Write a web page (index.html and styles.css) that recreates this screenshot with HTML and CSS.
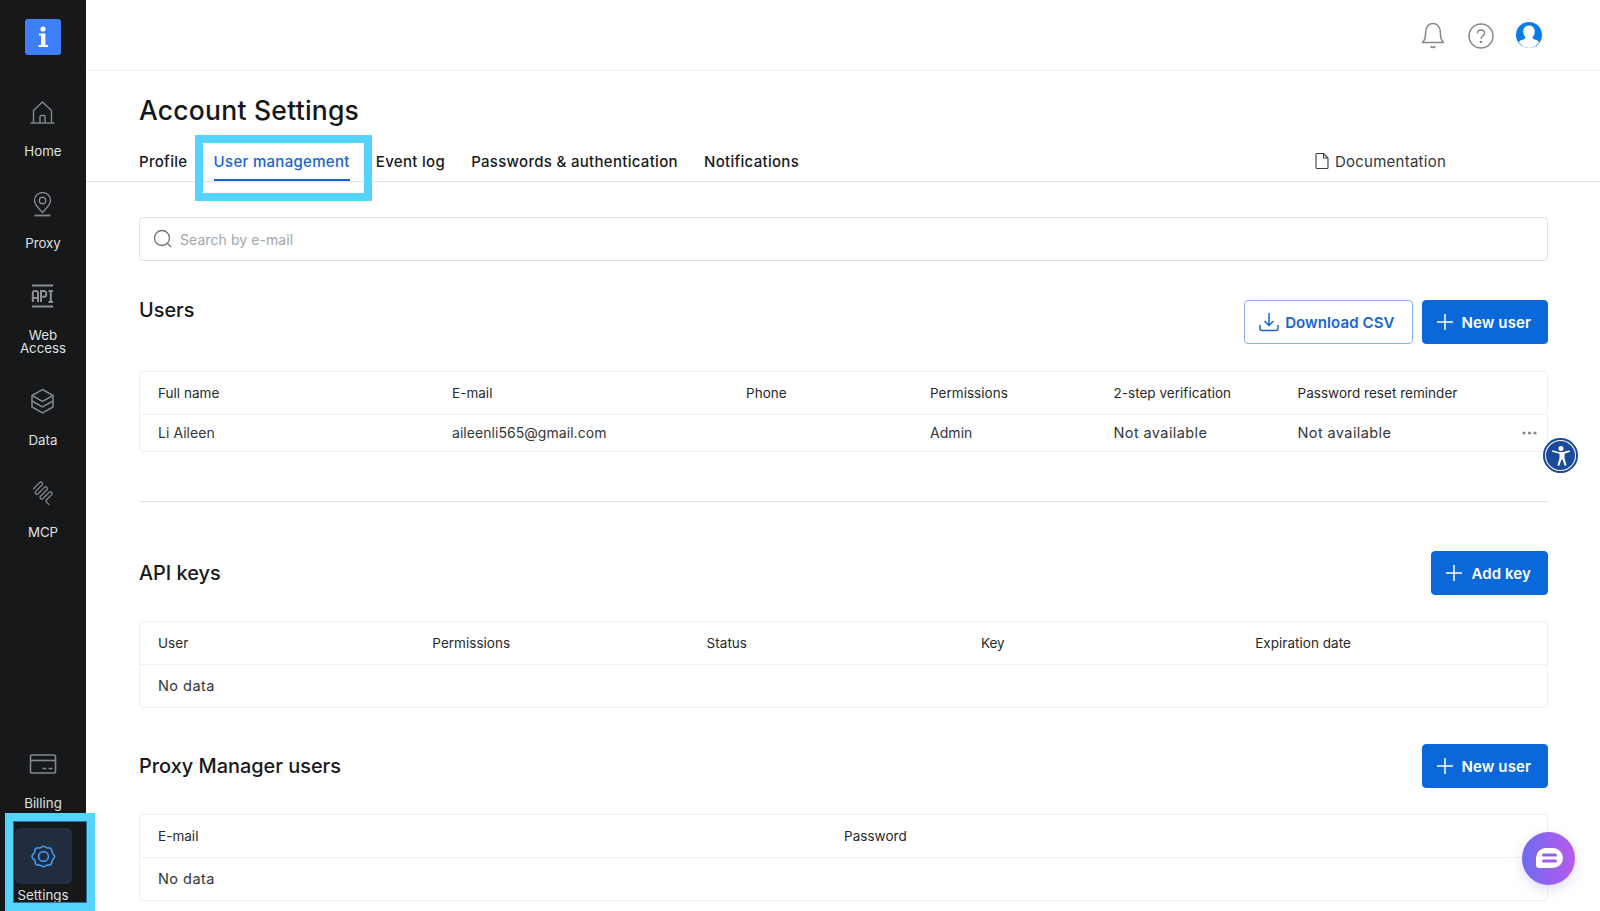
FILE: index.html
```html
<!DOCTYPE html>
<html lang="en">
<head>
<meta charset="utf-8">
<title>Account Settings</title>
<link rel="stylesheet" href="styles.css">
</head>
<body>
<div class="app">
  <aside class="sidebar">
    <div class="logo"><svg width="36" height="36" viewBox="0 0 36 36"><rect width="36" height="36" rx="3" fill="#3e7ffb"/><circle cx="18" cy="10" r="2.6" fill="#fff"/><path d="M14 14.5h6.4V26H23v2H13.5v-2H16v-9.5h-2z" fill="#fff"/></svg></div>
    <nav class="nav-top">
      <a class="nav-item"><svg class="ni" width="28" height="28" viewBox="0 0 28 28" fill="none" stroke="#85888c" stroke-width="1.4"><path d="M1.500 25h24"/><path d="M4.500 25V12.500L13.500 4 22.500 12.500V25"/><path d="M11 25v-6.500a1 1 0 0 1 1-1h3a1 1 0 0 1 1 1V25"/></svg><span>Home</span></a>
      <a class="nav-item"><svg class="ni" width="28" height="28" viewBox="0 0 28 28" fill="none" stroke="#85888c" stroke-width="1.4"><path d="M13.500 22.500C9 18 5.500 14.500 5.500 10.500a8 8 0 0 1 16 0c0 4-3.500 7.500-8 12z"/><circle cx="13.500" cy="10.500" r="3.200"/><path d="M5.500 25.500h16" stroke-width="1.800"/></svg><span>Proxy</span></a>
      <a class="nav-item"><svg class="ni" width="28" height="28" viewBox="0 0 28 28" fill="none" stroke="#8d9094" stroke-width="2"><path d="M3 3.500h21M3 24.500h21"/><path d="M3.800 20v-9a2 2 0 0 1 2-2h1.200a2 2 0 0 1 2 2v9M3.800 16h5.200M12 20V9h3.200a2 2 0 0 1 2 2v1.800a2 2 0 0 1-2 2H12M19.500 9h4.500M21.750 9v11M19.500 20h4.500"/></svg><span>Web<br>Access</span></a>
      <a class="nav-item"><svg class="ni" width="28" height="28" viewBox="0 0 28 28" fill="none" stroke="#85888c" stroke-width="1.500"><path d="M13.500 2.500l10.500 6v11.500l-10.500 6-10.500-6V8.500z"/><path d="M3 8.500l10.500 6 10.500-6M3 14l10.500 6 10.500-6"/></svg><span>Data</span></a>
      <a class="nav-item"><svg class="ni" width="28" height="28" viewBox="0 0 28 28" fill="none" stroke="#85888c" stroke-width="1.300"><path transform="translate(1.500 .5) rotate(45 12 13)" d="M3 17V8a1.700 1.700 0 0 1 3.400 0V17a1.700 1.700 0 0 0 3.400 0V8a1.700 1.700 0 0 1 3.400 0V17a1.700 1.700 0 0 0 3.400 0V8a1.700 1.700 0 0 1 3.400 0V15a2 2 0 0 0 2 2h3.500"/></svg><span>MCP</span></a>
    </nav>
    <nav class="nav-bottom">
      <a class="nav-item"><svg class="ni" width="28" height="28" viewBox="0 0 28 28" fill="none" stroke="#85888c" stroke-width="1.600"><rect x="1.500" y="5" width="25" height="18" rx="1.500"/><path d="M2 10.500h24" /><path d="M13.500 18.500h4M19.500 18.500h4"/></svg><span>Billing</span></a>
      <a class="nav-item nav-active"><span class="active-tile"><svg width="25" height="25" viewBox="0 0 28 28" fill="none" stroke="#3d9bf0" stroke-width="1.800"><path d="M9.500 4.500C11 4.500 12.300 2.500 14 2.500s3 2 4.500 2c2-.3 4 .5 4.500 1.800.5 1.500 0 2.500 1 3.700 1 1.100 2.500 2.300 2.500 4s-1.500 2.900-2.500 4c-1 1.200-.5 2.200-1 3.700-.5 1.300-2.500 2.100-4.500 1.800-1.500 0-2.800 2-4.500 2s-3-2-4.500-2c-2 .3-4-.5-4.500-1.800-.5-1.500 0-2.500-1-3.700C2.500 16.900 1 15.700 1 14s1.500-2.900 2.500-4c1-1.200.5-2.200 1-3.700C5 5 7.500 4.200 9.500 4.500z"/><circle cx="14" cy="14" r="5.500"/></svg></span><span class="settings-label">Settings</span></a>
    </nav>
  </aside>
  <main class="main">
    <header class="topbar">
      <svg class="ti-bell" width="26" height="28" viewBox="0 0 26 28" fill="none" stroke="#85888c" stroke-width="1.600"><path d="M2.500 21.500c2.200-2 3-4 3-8.500C5.500 6.500 8.500 2.500 13 2.500s7.500 4 7.500 10.500c0 4.500.8 6.500 3 8.500z" stroke-linejoin="round"/><path d="M10.500 25.500c1.500 1 3.500 1 5 0"/></svg>
      <svg class="ti-help" width="26" height="26" viewBox="0 0 26 26" fill="none" stroke="#85888c" stroke-width="1.500"><circle cx="13" cy="13" r="12"/><path d="M9.500 10.500c0-2 1.500-3.500 3.500-3.500s3.500 1.300 3.500 3.200c0 2.800-3.500 2.800-3.500 5.600"/><circle cx="13" cy="19" r=".6" fill="#85888c"/></svg>
      <svg class="ti-user" width="26" height="26" viewBox="0 0 26 26"><circle cx="13" cy="13" r="13" fill="#0a7ce8"/><path d="M13 3.500c-3.700 0-5.800 2.700-5.800 5.900 0 2.200.9 4.100 2 5.300.5.700.4 1.600-.4 2-1.700.9-4.600 1.400-6 3.300A12.900 12.900 0 0 0 13 25.900a12.900 12.900 0 0 0 10.200-5.900c-1.400-1.900-4.300-2.400-6-3.300-.8-.4-.9-1.300-.4-2 1.100-1.200 2-3.100 2-5.300 0-3.200-2.100-5.900-5.800-5.900z" fill="#fff"/></svg>
    </header>
    <div class="page-head">
      <h1 class="title">Account Settings</h1>
      <div class="tabs">
        <a class="tab">Profile</a>
        <a class="tab tab-active">User management</a>
        <a class="tab">Event log</a>
        <a class="tab">Passwords &amp; authentication</a>
        <a class="tab">Notifications</a>
        <a class="doc"><svg width="14" height="16" viewBox="0 0 14 16" fill="none" stroke="#3b3e42" stroke-width="1.100"><path d="M1 1.500a1 1 0 0 1 .8-1H8.500L13 5v9.500a1 1 0 0 1-1 1H2a1 1 0 0 1-1-1z"/><path d="M8.500.5V5H13"/></svg>Documentation</a>
      </div>
    </div>
    <div class="content">
      <div class="search">
        <svg width="20" height="20" viewBox="0 0 20 20" fill="none" stroke="#6f7276" stroke-width="1.300"><circle cx="9" cy="9" r="7.500"/><path d="M14.500 14.500l3.500 3.500"/></svg>
        <span class="placeholder">Search by e-mail</span>
      </div>
      <section class="sec-users">
        <div class="sec-head sec-head-users">
          <h2 class="sec-title">Users</h2>
          <div class="actions">
            <button class="btn btn-outline"><svg width="20" height="20" viewBox="0 0 20 20" fill="none" stroke="#1565d8" stroke-width="1.500"><path d="M10 1v12M5.500 9l4.500 4.500L14.500 9"/><path d="M1 13v3.500a2 2 0 0 0 2 2h14a2 2 0 0 0 2-2V13"/></svg>Download CSV</button>
            <button class="btn btn-primary"><svg class="plus" width="18" height="18" viewBox="0 0 18 18" stroke="#fff" stroke-width="1.500"><path d="M9 1v16M1 9h16"/></svg>New user</button>
          </div>
        </div>
        <div class="card card-users">
          <div class="row row-head users-grid"><span>Full name</span><span>E-mail</span><span>Phone</span><span>Permissions</span><span>2-step verification</span><span>Password reset reminder</span></div>
          <div class="row row-user users-grid"><span>Li Aileen</span><span>aileenli565@gmail.com</span><span></span><span>Admin</span><span class="wide-text">Not available</span><span class="wide-text">Not available</span>
            <svg class="more" width="15" height="4" viewBox="0 0 15 4" fill="#85888c"><circle cx="2" cy="2" r="1.600"/><circle cx="7.500" cy="2" r="1.600"/><circle cx="13" cy="2" r="1.600"/></svg></div>
        </div>
      </section>
      <hr class="divider">
      <section class="sec-api">
        <div class="sec-head">
          <h2 class="sec-title">API keys</h2>
          <button class="btn btn-primary"><svg class="plus" width="18" height="18" viewBox="0 0 18 18" stroke="#fff" stroke-width="1.500"><path d="M9 1v16M1 9h16"/></svg>Add key</button>
        </div>
        <div class="card">
          <div class="row row-head api-grid"><span>User</span><span>Permissions</span><span>Status</span><span>Key</span><span>Expiration date</span></div>
          <div class="row row-empty">No data</div>
        </div>
      </section>
      <section class="sec-proxy">
        <div class="sec-head">
          <h2 class="sec-title">Proxy Manager users</h2>
          <button class="btn btn-primary"><svg class="plus" width="18" height="18" viewBox="0 0 18 18" stroke="#fff" stroke-width="1.500"><path d="M9 1v16M1 9h16"/></svg>New user</button>
        </div>
        <div class="card">
          <div class="row row-head proxy-grid"><span>E-mail</span><span>Password</span></div>
          <div class="row row-empty">No data</div>
        </div>
      </section>
    </div>
  </main>
</div>
<div class="hl hl-tab"></div>
<div class="hl hl-settings"></div>
<div class="a11y"><svg width="22" height="22" viewBox="0 0 22 22" fill="#fff"><circle cx="11" cy="3.500" r="2.500"/><path d="M2 6.800l.5-1.500 6 1.700h5l6-1.700.5 1.500-5.500 2v4.500l2 7-1.700.6-2.300-6.400h-1l-2.300 6.400-1.700-.6 2-7V8.800z"/></svg></div>
<div class="chat"><svg width="28" height="24" viewBox="0 0 28 24"><path d="M10 1h8a10 10 0 0 1 0 20H4a3 3 0 0 1-3-3v-7A10 10 0 0 1 10 1z" fill="#fff"/><rect x="7" y="6.500" width="15" height="3" rx="1.500" fill="#8f60ec"/><rect x="7" y="12.500" width="15" height="3" rx="1.500" fill="#a45cec"/></svg></div>
</body>
</html>
```
FILE: styles.css
```css
* { box-sizing: border-box; }
html, body { margin: 0; height: 100%; }
body {
  font-family: Inter, "Liberation Sans", sans-serif;
  color: #17191c;
  background: #fff;
  overflow: hidden;
  position: relative;
}
.app { display: flex; height: 911px; overflow: hidden; }

.sidebar {
  width: 86px;
  flex: none;
  background: #16181a;
  display: flex;
  flex-direction: column;
  padding-top: 19px;
}
.logo { display: flex; justify-content: center; height: 36px; margin-left: -1px; }
.nav-top { display: flex; flex-direction: column; margin-top: 43px; }
.nav-bottom { display: flex; flex-direction: column; margin-top: auto; }
.nav-item {
  display: flex;
  flex-direction: column;
  align-items: center;
  padding-bottom: 32px;
  color: #dfe0e2;
  font-size: 13.300px;
  line-height: 13px;
  text-align: center;
}
.ni { flex: none; margin-bottom: 19px; }
.nav-bottom .nav-item:first-child { padding-bottom: 18px; }
.nav-bottom .nav-active { padding-bottom: 0; height: 83px; }
.active-tile {
  width: 57px;
  height: 56px;
  background: #212c3e;
  border-radius: 5px;
  display: flex;
  align-items: center;
  justify-content: center;
  flex: none;
}
.settings-label { margin-top: 5px; }

.main { flex: 1; min-width: 0; display: flex; flex-direction: column; }
.topbar {
  height: 71px;
  flex: none;
  border-bottom: 1px solid #f0f1f2;
  display: flex;
  align-items: center;
  justify-content: flex-end;
  gap: 21px;
  padding: 0 58px 0 0;
}
.ti-bell { margin-right: 1px; }
.ti-help { margin-top: 2px; }
.ti-user { margin-left: 1px; }
.page-head { flex: none; border-bottom: 1px solid #dfe1e4; padding: 24px 52px 0 53px; height: 111px; }
.title { margin: 0; font-size: 26.500px; line-height: 30px; font-weight: 500; letter-spacing: .23px; color: #14161a; }
.tabs { display: flex; align-items: center; margin-top: 24px; height: 24px; font-size: 15px; font-weight: 500; letter-spacing: .3px; }
.tab { margin-right: 26.200px; color: #17191c; position: relative; white-space: nowrap; }
.tab-active { color: #1565d8; }
.tab-active::after {
  content: "";
  position: absolute;
  left: 0; right: 0;
  bottom: -10px;
  height: 2px;
  background: #1565d8;
}
.doc { margin-left: auto; margin-right: 102px; display: flex; align-items: center; gap: 6px; font-weight: 400; color: #33363a; letter-spacing: .25px; }

.content { padding: 35px 52px 0 53px; flex: 1; }
.search {
  height: 44px;
  border: 1px solid #dfe1e4;
  border-radius: 4px;
  display: flex;
  align-items: center;
  gap: 7px;
  padding-left: 13px;
  margin-bottom: 39px;
}
.placeholder { color: #a3a6aa; font-size: 14px; letter-spacing: .07px; }

.sec-head { display: flex; justify-content: space-between; align-items: center; height: 44px; }
.sec-head-users { align-items: flex-start; }
.sec-head-users .sec-title { line-height: 21px; }
.sec-title { margin: 0; font-size: 19.900px; font-weight: 500; color: #17191c; }
.actions { display: flex; gap: 9px; }
.btn {
  height: 44px;
  border-radius: 4px;
  display: flex;
  align-items: center;
  gap: 8px;
  font: 600 15px Inter, "Liberation Sans", sans-serif;
  letter-spacing: .1px;
  padding: 0 16px 0 13px;
  border: 1px solid #0a68d8;
  white-space: nowrap;
}
.btn-primary { background: #0a68d8; color: #fff; }
.btn-outline { background: #fff; color: #1565d8; border-color: #8cb0ef; gap: 6px; padding: 0 17px 0 14px; }

.card { border: 1px solid #f0f1f3; border-radius: 4px; margin-top: 26px; }
.card-users { margin-top: 27px; }
.row { display: grid; align-items: center; padding-left: 18px; font-size: 14px; color: #33363a; letter-spacing: .05px; position: relative; }
.row-head { height: 43px; padding-bottom: 1px; border-bottom: 1px solid #f0f1f3; font-size: 13.500px; color: #26292d; letter-spacing: .03px; }
.row-user { height: 36px; padding-bottom: 1px; }
.row-empty { height: 42px; padding-bottom: 1px; font-size: 14.500px; letter-spacing: .45px; }
.wide-text { font-size: 14.500px; letter-spacing: .4px; }
.users-grid { grid-template-columns: 294px 294px 184px 183.500px 184px 1fr; }
.api-grid { grid-template-columns: 274.300px 274.300px 274.300px 274.300px 1fr; }
.proxy-grid { grid-template-columns: 686px 1fr; }
.more { position: absolute; right: 10px; top: 16px; }

.divider { border: 0; border-top: 1px solid #dfe1e4; margin: 49px 0 49px; }
.sec-proxy { margin-top: 36px; }

.hl { position: absolute; border: 8px solid #55d4ff; }
.hl-tab { left: 195px; top: 135px; width: 177px; height: 66px; }
.hl-settings { left: 5px; top: 813px; width: 90px; height: 98px; box-shadow: inset 0 0 0 1px #2b6f9e; }
.a11y {
  position: absolute;
  left: 1543px; top: 438px;
  width: 35px; height: 35px;
  border-radius: 50%;
  background: #1a4a9c;
  box-shadow: inset 0 0 0 2px #1a4a9c, inset 0 0 0 3px #fff;
  display: flex; align-items: center; justify-content: center;
}
.chat {
  position: absolute;
  left: 1522px; top: 832px;
  width: 53px; height: 53px;
  border-radius: 50%;
  background: linear-gradient(90deg, #6f6bf0, #b65aec);
  box-shadow: 0 4px 12px rgba(120, 110, 220, .25);
  display: flex; align-items: center; justify-content: center;
}
```
